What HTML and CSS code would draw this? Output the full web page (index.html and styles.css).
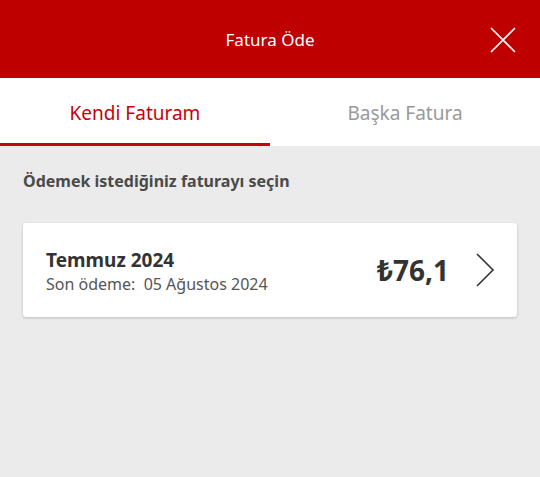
FILE: index.html
```html
<!DOCTYPE html>
<html lang="tr">
<head>
    <meta charset="UTF-8">
    <meta name="viewport" content="width=device-width, initial-scale=1.0">
    <title>Fatura Öde</title>
    <link rel="stylesheet" href="styles.css">
</head>
<body>
    <header class="topbar">
        <h1>Fatura Öde</h1>
        <button class="close" aria-label="Kapat">
            <svg width="26" height="26" viewBox="0 0 26 26">
                <path d="M1 1 L25 25 M25 1 L1 25" stroke="#fff" stroke-width="1.6" fill="none"/>
            </svg>
        </button>
    </header>

    <nav class="tabs">
        <button class="tab valgt">Kendi Faturam</button>
        <button class="tab">Başka Fatura</button>
    </nav>

    <main class="content">
        <h2>Ödemek istediğiniz faturayı seçin</h2>

        <article class="bill">
            <div class="info">
                <h3>Temmuz 2024</h3>
                <p>Son ödeme:&nbsp; 05 Ağustos 2024</p>
            </div>
            <p class="amount">₺76,1</p>
            <svg class="chevron" width="20" height="36" viewBox="0 0 20 36">
                <path d="M2 2 L18 18 L2 34" stroke="#333" stroke-width="1.6" fill="none"/>
            </svg>
        </article>
    </main>
</body>
</html>
```

FILE: styles.css
```css
body{
    margin: 0;
    background-color: #ebebeb;
    font-family: 'Noto Sans', 'DejaVu Sans', sans-serif;
    height: 477px;
}

.topbar{
    background-color: #be0000;
    height: 78px;
    display: grid;
    place-items: center;
    position: relative;
}

.topbar h1{
    margin: 0;
    color: #fff;
    font-size: 17px;
    font-weight: normal;
}

.close{
    position: absolute;
    right: 24px;
    top: 27px;
    border: none;
    background: none;
    padding: 0;
    line-height: 0;
}

.tabs{
    background-color: #fff;
    height: 68px;
    display: grid;
    grid-template-columns: 1fr 1fr;
}

.tab{
    border: none;
    background: none;
    font-family: inherit;
    font-size: 19px;
    color: #999;
    padding: 4px 0 0;
    border-bottom: 3px solid transparent;
}

.valgt{
    color: #c8000a;
    border-bottom-color: #c8000a;
}

.content{
    padding: 24px 23px;
}

.content h2{
    margin: 0 0 31px;
    font-size: 16px;
    color: #4a4a4a;
    font-weight: bold;
}

.bill{
    background-color: #fff;
    border-radius: 3px;
    box-shadow: 0 1px 3px rgba(0,0,0,0.2);
    height: 94px;
    display: flex;
    align-items: center;
    padding: 0 22px 0 23px;
}

.info{
    flex: 1;
    padding-top: 4px;
}

.info h3{
    margin: 0;
    font-size: 19px;
    color: #333;
    line-height: 24px;
}

.info p{
    margin: 0;
    font-size: 16px;
    color: #555;
    line-height: 24px;
}

.amount{
    margin: 0 26px 0 0;
    font-size: 28px;
    font-weight: bold;
    color: #333;
}
```
